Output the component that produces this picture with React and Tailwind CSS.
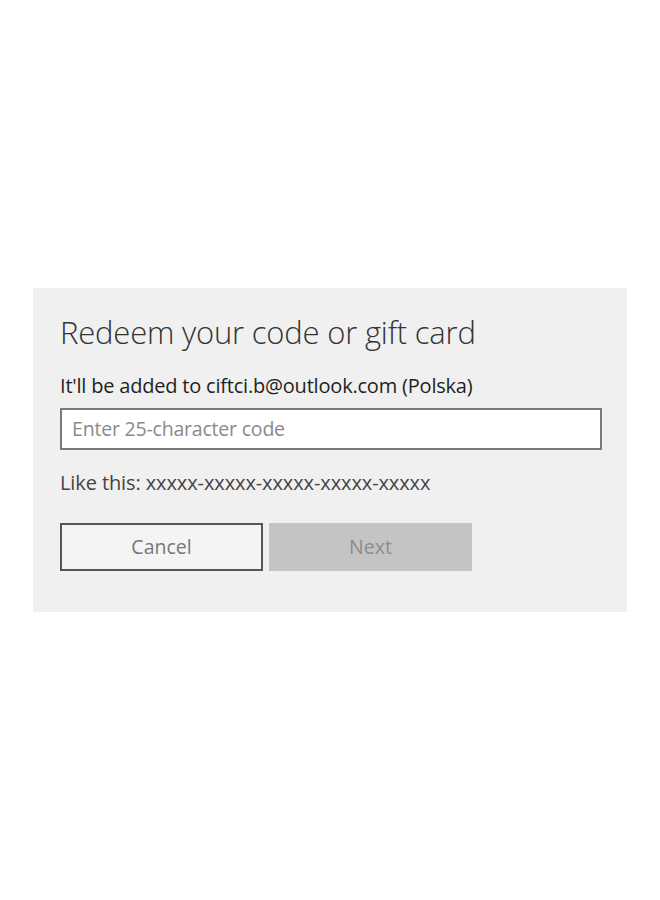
import React from "react";

export default function App() {
  return (
    <div className="w-[660px] h-[900px] bg-white flex flex-col pt-[288px] pl-[33px]" style={{ fontFamily: '"Open Sans", "Noto Sans", sans-serif' }}>
      <div className="w-[594px] h-[324px] bg-[#f0f0f0] pl-[27px] pt-[22px]">
        <h1 className="text-[31px] leading-[44px] font-light text-[#333] tracking-[-0.2px]">Redeem your code or gift card</h1>
        <p className="mt-[20px] text-[20px] leading-[24px] text-[#1f1f1f] tracking-[-0.2px]">It'll be added to ciftci.b@outlook.com (Polska)</p>
        <div className="mt-[10px] w-[542px] h-[42px] bg-white border-2 border-[#7a7a7a] flex items-center px-[10px]">
          <span className="text-[19.5px] text-[#8a8a8a] tracking-[-0.2px]">Enter 25-character code</span>
        </div>
        <p className="mt-[21px] text-[20px] leading-[24px] text-[#444] tracking-[-0.1px]">Like this: xxxxx-xxxxx-xxxxx-xxxxx-xxxxx</p>
        <div className="mt-[28px] flex gap-[6px]">
          <button className="w-[203px] h-[48px] border-2 border-[#555] bg-[#f4f4f4] text-[19.5px] text-[#777]">Cancel</button>
          <button className="w-[203px] h-[48px] bg-[#c4c4c4] text-[19.5px] text-[#8c8c8c]">Next</button>
        </div>
      </div>
    </div>
  );
}
